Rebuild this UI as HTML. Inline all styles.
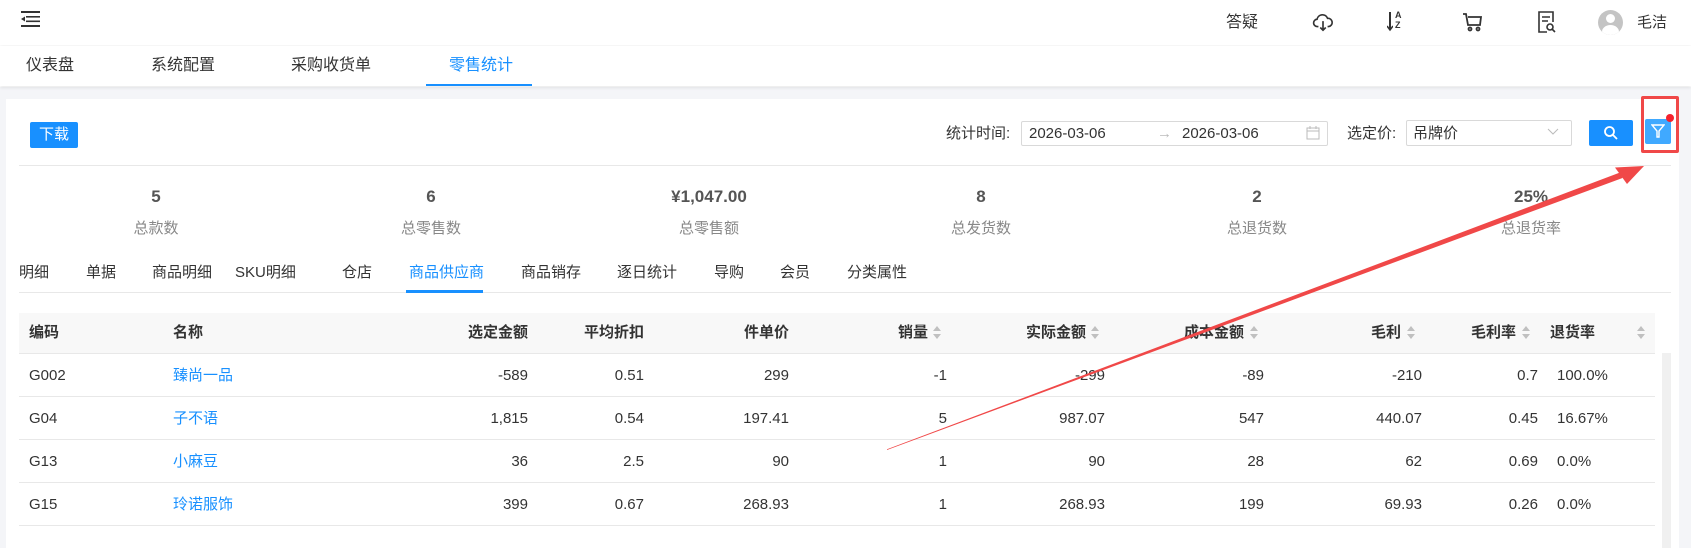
<!DOCTYPE html>
<html><head><meta charset="utf-8">
<style>
*{margin:0;padding:0;box-sizing:border-box}
body{width:1691px;height:548px;overflow:hidden;background:#fff;font-family:"Liberation Sans","Noto Sans CJK SC",sans-serif;font-size:15px;line-height:20px;color:#333;position:relative}
.a{position:absolute;white-space:nowrap}
.hdr{left:0;top:0;width:1691px;height:45px;background:#fff;box-shadow:0 1px 4px rgba(0,0,0,.06)}
.tabs{left:0;top:46px;width:1691px;height:40px;background:#fff;box-shadow:0 2px 3px rgba(0,0,0,.08)}
.bg{left:0;top:87px;width:1691px;height:461px;background:#f4f5f8}
.card{left:6px;top:99px;width:1673px;height:449px;background:#fff}
.c{transform:translateX(-50%);text-align:center}
.sv{font-size:17px;font-weight:bold;color:#555}
.sl{font-size:15px;color:#888}
.th{font-weight:bold;color:#333}
.r{transform:translateX(-100%)}
.blue{color:#1890ff}
.sort{position:absolute;width:8px;height:14px}
.sort:before,.sort:after{content:"";position:absolute;left:0;border-left:4px solid transparent;border-right:4px solid transparent}
.sort:before{top:0;border-bottom:5px solid #c0c0c0}
.sort:after{top:8px;border-top:5px solid #c0c0c0}
.line{position:absolute;left:19px;width:1636px;height:1px;background:#e8e8e8}
</style></head><body>
<div class="a hdr"></div>
<svg class="a" style="left:21px;top:11px" width="20" height="16" viewBox="0 0 20 16"><rect x="0" y="0" width="19" height="2" fill="#333"/><rect x="5" y="5" width="14" height="1.6" fill="#333"/><rect x="5" y="9.5" width="14" height="1.6" fill="#333"/><rect x="0" y="14" width="19" height="2" fill="#333"/><polygon points="0,8 4,5.5 4,10.5" fill="#333"/></svg>
<div class="a" style="left:1226px;top:13px;font-size:16px">答疑</div>
<svg class="a" style="left:1312px;top:11px" width="22" height="22" viewBox="0 0 24 24" fill="none" stroke="#333" stroke-width="1.8"><path d="M7 17H6a4 4 0 0 1-.5-8A6 6 0 0 1 17 8a4.5 4.5 0 0 1 1 9h-1"/><path d="M12 11v10M9 18l3 3 3-3"/></svg>
<div class="a" style="left:1387px;top:10px;width:20px;height:24px"><div class="a" style="left:2px;top:2px;width:2px;height:18px;background:#333"></div><svg class="a" style="left:0;top:14px" width="6" height="8"><path d="M0 2l3 4 3-4" stroke="#333" fill="none" stroke-width="1.5"/></svg><div class="a" style="left:8px;top:0;font-size:9px;font-weight:bold;line-height:10px">A<br>Z</div></div>
<svg class="a" style="left:1462px;top:12px" width="21" height="20" viewBox="0 0 21 20" fill="none" stroke="#333" stroke-width="1.8"><path d="M1 2h3l2 11h12l1-8H6"/><circle cx="8" cy="17" r="1.5"/><circle cx="16" cy="17" r="1.5"/></svg>
<svg class="a" style="left:1537px;top:10px" width="20" height="24" viewBox="0 0 20 24" fill="none" stroke="#333" stroke-width="1.6"><path d="M10 22H2V2h14v10"/><path d="M5 7h8M5 11h6"/><circle cx="13" cy="17" r="3"/><path d="M15 19l3 3"/></svg>
<div class="a" style="left:1598px;top:10px;width:25px;height:25px;border-radius:50%;background:#c4c4c4;overflow:hidden"><div class="a" style="left:8px;top:4px;width:9px;height:9px;border-radius:50%;background:#fff"></div><div class="a" style="left:4px;top:15px;width:17px;height:14px;border-radius:50%;background:#fff"></div></div>
<div class="a" style="left:1637px;top:13px;font-size:15px">毛洁</div>

<div class="a bg"></div>
<div class="a tabs"></div>
<div class="a" style="left:26px;top:56px;font-size:16px">仪表盘</div>
<div class="a" style="left:151px;top:56px;font-size:16px">系统配置</div>
<div class="a" style="left:291px;top:56px;font-size:16px">采购收货单</div>
<div class="a blue" style="left:449px;top:56px;font-size:16px">零售统计</div>
<div class="a" style="left:426px;top:84px;width:106px;height:2px;background:#1890ff"></div>

<div class="a card"></div>
<div class="a" style="left:30px;top:122px;width:48px;height:26px;background:#1890ff;border-radius:2px;color:#fff;font-size:15px;text-align:center;line-height:26px">下载</div>
<div class="a" style="left:946px;top:124px">统计时间:</div>
<div class="a" style="left:1021px;top:121px;width:307px;height:25px;border:1px solid #d9d9d9;border-radius:2px"></div>
<div class="a" style="left:1029px;top:124px">2026-03-06</div>
<div class="a" style="left:1157px;top:124px;color:#bbb">→</div>
<div class="a" style="left:1182px;top:124px">2026-03-06</div>
<svg class="a" style="left:1306px;top:126px" width="14" height="14" viewBox="0 0 14 14" fill="none" stroke="#bbb"><rect x="1" y="2" width="12" height="11"/><path d="M1 5h12M4 0v3M10 0v3"/></svg>
<div class="a" style="left:1347px;top:124px">选定价:</div>
<div class="a" style="left:1406px;top:120px;width:166px;height:26px;border:1px solid #d9d9d9;border-radius:2px"></div>
<div class="a" style="left:1413px;top:124px">吊牌价</div>
<svg class="a" style="left:1547px;top:128px" width="12" height="8"><path d="M1 1l5 5 5-5" stroke="#bbb" fill="none"/></svg>
<div class="a" style="left:1589px;top:120px;width:44px;height:26px;background:#1890ff;border-radius:2px"></div>
<svg class="a" style="left:1603px;top:125px" width="16" height="16" viewBox="0 0 16 16" fill="none" stroke="#fff" stroke-width="1.8"><circle cx="6.5" cy="6.5" r="4.5"/><path d="M10 10l4 4"/></svg>
<div class="a" style="left:1645px;top:119px;width:26px;height:25px;background:#40a9ff;border-radius:2px"></div>
<svg class="a" style="left:1651px;top:124px" width="14" height="14" viewBox="0 0 14 14" fill="none" stroke="#fff" stroke-width="1.4"><path d="M1 1h12L8 7v6H6V7z"/></svg>
<div class="a" style="left:1666px;top:114px;width:8px;height:8px;border-radius:50%;background:#f5222d"></div>
<div class="a" style="left:1641px;top:96px;width:38px;height:57px;border:3px solid #f04848;border-radius:2px"></div>
<div class="a" style="left:19px;top:165px;width:1652px;height:1px;background:#e8e8e8"></div>

<div class="a c sv" style="left:156px;top:187px">5</div>
<div class="a c sv" style="left:431px;top:187px">6</div>
<div class="a c sv" style="left:709px;top:187px">¥1,047.00</div>
<div class="a c sv" style="left:981px;top:187px">8</div>
<div class="a c sv" style="left:1257px;top:187px">2</div>
<div class="a c sv" style="left:1531px;top:187px">25%</div>
<div class="a c sl" style="left:156px;top:219px">总款数</div>
<div class="a c sl" style="left:431px;top:219px">总零售数</div>
<div class="a c sl" style="left:709px;top:219px">总零售额</div>
<div class="a c sl" style="left:981px;top:219px">总发货数</div>
<div class="a c sl" style="left:1257px;top:219px">总退货数</div>
<div class="a c sl" style="left:1531px;top:219px">总退货率</div>

<div class="a" style="left:19px;top:263px">明细</div>
<div class="a" style="left:86px;top:263px">单据</div>
<div class="a" style="left:152px;top:263px">商品明细</div>
<div class="a" style="left:235px;top:263px">SKU明细</div>
<div class="a" style="left:342px;top:263px">仓店</div>
<div class="a blue" style="left:409px;top:263px">商品供应商</div>
<div class="a" style="left:521px;top:263px">商品销存</div>
<div class="a" style="left:617px;top:263px">逐日统计</div>
<div class="a" style="left:714px;top:263px">导购</div>
<div class="a" style="left:780px;top:263px">会员</div>
<div class="a" style="left:847px;top:263px">分类属性</div>
<div class="a" style="left:19px;top:292px;width:1652px;height:1px;background:#e8e8e8"></div>
<div class="a" style="left:406px;top:290px;width:77px;height:3px;background:#1890ff"></div>

<div class="a" style="left:19px;top:313px;width:1636px;height:40px;background:#f8f8f8"></div>
<div class="a" style="left:1662px;top:353px;width:9px;height:195px;background:#f0f0f0"></div>
<div class="line" style="top:353px"></div>
<div class="line" style="top:396px"></div>
<div class="line" style="top:439px"></div>
<div class="line" style="top:482px"></div>
<div class="line" style="top:525px"></div>

<div class="a th" style="left:29px;top:323px">编码</div>
<div class="a th" style="left:173px;top:323px">名称</div>
<div class="a th r" style="left:528px;top:323px">选定金额</div>
<div class="a th r" style="left:644px;top:323px">平均折扣</div>
<div class="a th r" style="left:789px;top:323px">件单价</div>
<div class="a th r" style="left:928px;top:323px">销量</div><div class="sort" style="left:933px;top:326px"></div>
<div class="a th r" style="left:1086px;top:323px">实际金额</div><div class="sort" style="left:1091px;top:326px"></div>
<div class="a th r" style="left:1244px;top:323px">成本金额</div><div class="sort" style="left:1250px;top:326px"></div>
<div class="a th r" style="left:1401px;top:323px">毛利</div><div class="sort" style="left:1407px;top:326px"></div>
<div class="a th r" style="left:1516px;top:323px">毛利率</div><div class="sort" style="left:1522px;top:326px"></div>
<div class="a th" style="left:1550px;top:323px">退货率</div><div class="sort" style="left:1637px;top:326px"></div>

<div class="a" style="left:29px;top:366px">G002</div><div class="a blue" style="left:173px;top:366px">臻尚一品</div>
<div class="a r" style="left:528px;top:366px">-589</div><div class="a r" style="left:644px;top:366px">0.51</div><div class="a r" style="left:789px;top:366px">299</div><div class="a r" style="left:947px;top:366px">-1</div><div class="a r" style="left:1105px;top:366px">-299</div><div class="a r" style="left:1264px;top:366px">-89</div><div class="a r" style="left:1422px;top:366px">-210</div><div class="a r" style="left:1538px;top:366px">0.7</div><div class="a" style="left:1557px;top:366px">100.0%</div>

<div class="a" style="left:29px;top:409px">G04</div><div class="a blue" style="left:173px;top:409px">子不语</div>
<div class="a r" style="left:528px;top:409px">1,815</div><div class="a r" style="left:644px;top:409px">0.54</div><div class="a r" style="left:789px;top:409px">197.41</div><div class="a r" style="left:947px;top:409px">5</div><div class="a r" style="left:1105px;top:409px">987.07</div><div class="a r" style="left:1264px;top:409px">547</div><div class="a r" style="left:1422px;top:409px">440.07</div><div class="a r" style="left:1538px;top:409px">0.45</div><div class="a" style="left:1557px;top:409px">16.67%</div>

<div class="a" style="left:29px;top:452px">G13</div><div class="a blue" style="left:173px;top:452px">小麻豆</div>
<div class="a r" style="left:528px;top:452px">36</div><div class="a r" style="left:644px;top:452px">2.5</div><div class="a r" style="left:789px;top:452px">90</div><div class="a r" style="left:947px;top:452px">1</div><div class="a r" style="left:1105px;top:452px">90</div><div class="a r" style="left:1264px;top:452px">28</div><div class="a r" style="left:1422px;top:452px">62</div><div class="a r" style="left:1538px;top:452px">0.69</div><div class="a" style="left:1557px;top:452px">0.0%</div>

<div class="a" style="left:29px;top:495px">G15</div><div class="a blue" style="left:173px;top:495px">玲诺服饰</div>
<div class="a r" style="left:528px;top:495px">399</div><div class="a r" style="left:644px;top:495px">0.67</div><div class="a r" style="left:789px;top:495px">268.93</div><div class="a r" style="left:947px;top:495px">1</div><div class="a r" style="left:1105px;top:495px">268.93</div><div class="a r" style="left:1264px;top:495px">199</div><div class="a r" style="left:1422px;top:495px">69.93</div><div class="a r" style="left:1538px;top:495px">0.26</div><div class="a" style="left:1557px;top:495px">0.0%</div>

<svg class="a" style="left:0;top:0" width="1691" height="548">
<polygon points="887,450 887,449.3 1620,172.5 1622.5,178" fill="#f04848"/>
<polygon points="1644,166 1615,167.5 1627,184" fill="#f04848"/>
</svg>
</body></html>
